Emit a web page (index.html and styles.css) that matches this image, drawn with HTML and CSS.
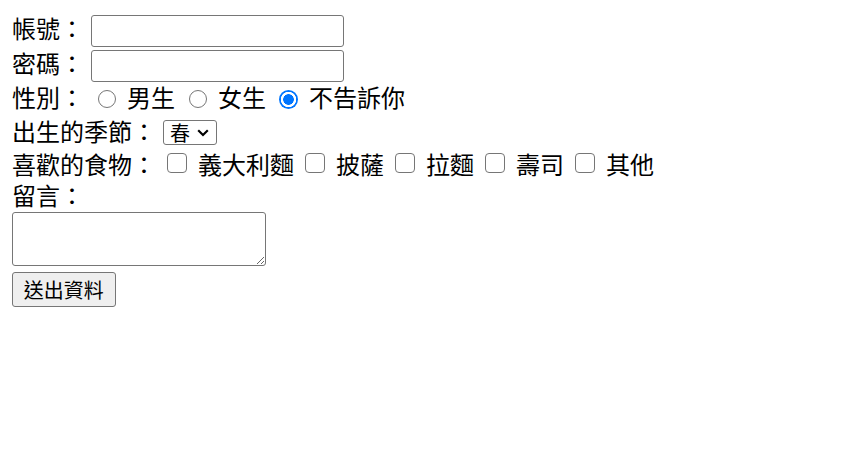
FILE: index.html
```html
<!DOCTYPE html>
<html lang="zh-Hant">
<head>
    <meta charset="UTF-8">
    <meta name="viewport" content="width=device-width, initial-scale=1.0">
    <title>表單練習</title>
    <link rel="stylesheet" href="styles.css">
</head>
<body>
    <form class="survey" onsubmit="return false;">
        <div class="row row-account">
            <label class="label" for="account">帳號：</label>
            <input type="text" id="account" class="field">
        </div>
        <div class="row row-password">
            <label class="label" for="password">密碼：</label>
            <input type="password" id="password" class="field">
        </div>
        <div class="row row-gender">
            <span class="label">性別：</span>
            <label class="choice"><input type="radio" name="gender" value="male">男生</label>
            <label class="choice"><input type="radio" name="gender" value="female">女生</label>
            <label class="choice"><input type="radio" name="gender" value="secret" checked>不告訴你</label>
        </div>
        <div class="row row-season">
            <label class="label" for="season">出生的季節：</label>
            <select id="season" class="picker">
                <option>春</option>
                <option>夏</option>
                <option>秋</option>
                <option>冬</option>
            </select>
        </div>
        <div class="row row-food">
            <span class="label">喜歡的食物：</span>
            <label class="choice"><input type="checkbox" name="food" value="pasta">義大利麵</label>
            <label class="choice"><input type="checkbox" name="food" value="pizza">披薩</label>
            <label class="choice"><input type="checkbox" name="food" value="ramen">拉麵</label>
            <label class="choice"><input type="checkbox" name="food" value="sushi">壽司</label>
            <label class="choice"><input type="checkbox" name="food" value="other">其他</label>
        </div>
        <div class="row row-note">
            <label class="label" for="note">留言：</label>
        </div>
        <textarea id="note" class="note"></textarea>
        <button type="submit" class="send">送出資料</button>
    </form>
</body>
</html>
```

FILE: styles.css
```css
/* page is drawn at 150%: text 24px, controls zoomed */
body {
    margin: 12px;
    font-family: "Noto Sans CJK TC", "Noto Sans CJK SC", sans-serif;
    font-size: 24px;
    color: #000;
    background: #fff;
}
.survey {
    display: flex;
    flex-direction: column;
    align-items: flex-start;
}
.row {
    display: flex;
    align-items: center;
    white-space: nowrap;
}
.row-account, .row-password {
    height: 35px;
}
.row-gender {
    height: 33px;
}
.row-season {
    height: 34px;
}
.row-food {
    height: 32px;
}
.row-note {
    height: 31px;
}
.label, .choice {
    line-height: 28px;
    padding-bottom: 3px;
}
.choice {
    display: flex;
    align-items: center;
}
.field, .note, .send {
    zoom: 1.5;
}
.field {
    box-sizing: border-box;
    width: 169px;
    height: 21px;
    margin: 2px 0 0 4.5px;
    border: 1px solid #767676;
    border-radius: 2px;
    font-family: inherit;
}
.choice input {
    -webkit-appearance: none;
    appearance: none;
    box-sizing: border-box;
    flex: none;
    background: #fff;
    cursor: pointer;
}
.choice input[type="radio"] {
    width: 18px;
    height: 18px;
    margin: 4.5px 11.5px 0 13.5px;
    border: 1.5px solid #767676;
    border-radius: 50%;
}
.choice input[type="radio"]:checked {
    width: 19px;
    height: 19px;
    margin: 4.5px 11px 0 13px;
    border: none;
    background: radial-gradient(circle, #0075ff 0, #0075ff 5px, #fff 5.6px, #fff 7.4px, #0075ff 8px);
}
.choice input[type="checkbox"] {
    width: 20px;
    height: 20px;
    margin: 0 11px 2px;
    border: 1.5px solid #767676;
    border-radius: 4px;
}
.picker {
    -webkit-appearance: none;
    appearance: none;
    box-sizing: border-box;
    width: 54px;
    height: 25px;
    margin: 1px 0 0 7px;
    padding: 0 0 0 6px;
    border: 1px solid #767676;
    border-radius: 3px;
    font-family: "Noto Sans CJK TC", sans-serif;
    font-size: 20px;
    line-height: 21px;
    color: #000;
    background: #fff url("data:image/svg+xml,%3Csvg xmlns='http://www.w3.org/2000/svg' width='12' height='8' viewBox='0 0 12 8'%3E%3Cpath d='M1.2 1.3L6 6l4.8-4.7' fill='none' stroke='%23000' stroke-width='2.2'/%3E%3C/svg%3E") no-repeat right 7px center;
}
.note {
    box-sizing: border-box;
    width: 169px;
    height: 36px;
    margin: 0;
    border: 1px solid #767676;
    border-radius: 2px;
}
.send {
    box-sizing: border-box;
    width: 69px;
    height: 23.4px;
    margin-top: 4px;
    padding: 0;
    border: 1px solid #767676;
    border-radius: 2px;
    background: #efefef;
    font-family: "Noto Sans CJK TC", sans-serif;
    font-size: 13.33px;
    line-height: 1;
    color: #000;
}
```
